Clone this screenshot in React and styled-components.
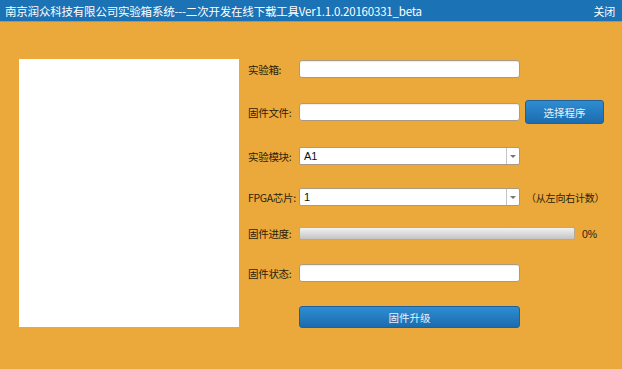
import React from "react";
import styled, { createGlobalStyle } from "styled-components";

const Global = createGlobalStyle`
  html, body { margin: 0; padding: 0; }
  body {
    width: 622px; height: 369px; overflow: hidden;
    background: #eca93b;
    font-family: "Liberation Sans", "Noto Sans CJK SC", sans-serif;
  }
`;

const Window = styled.div`
  width: 622px; height: 369px;
  background: #eca93b;
  display: flex; flex-direction: column;
`;

const TitleBar = styled.div`
  height: 21px;
  background: #1b72b5;
  border-bottom: 1px solid #6aa3c8;
  display: flex; align-items: center; justify-content: space-between;
  padding: 0 7px 0 5px;
  color: #ffffff;
  font-size: 11.5px;
  font-family: "Noto Sans CJK SC", sans-serif;
  letter-spacing: -0.2px;
`;

const Close = styled.span`
  font-size: 11px;
`;

const Body = styled.div`
  display: flex;
  padding: 37px 0 0 19px;
  gap: 9px;
`;

const Panel = styled.div`
  width: 220px; height: 268px;
  background: #ffffff;
`;

const Form = styled.div`
  display: flex; flex-direction: column;
  padding-top: 1px;
`;

const Row = styled.div`
  display: flex; align-items: center;
  height: ${p => p.$h}px;
  margin-bottom: ${p => p.$mb || 0}px;
`;

const Label = styled.div`
  width: 51px;
  font-size: 10.5px;
  color: #2b1d0a;
  font-family: "Noto Sans CJK SC", sans-serif;
  letter-spacing: -0.3px;
  white-space: nowrap;
`;

const Input = styled.div`
  width: 219px; height: 16px;
  background: #ffffff;
  border: 1px solid #a99a80;
  border-radius: 3px;
  box-shadow: inset 0 1px 1px rgba(0,0,0,0.08);
`;

const Select = styled.div`
  width: 219px; height: 16px;
  background: #ffffff;
  border: 1px solid #a99a80;
  border-radius: 2px;
  display: flex; align-items: center;
  font-size: 11px; color: #111;
`;

const SelectText = styled.div`
  flex: 1;
  padding-left: 4px;
`;

const Arrow = styled.div`
  width: 12px; height: 100%;
  border-left: 1px solid #c4c4c4;
  display: flex; align-items: center; justify-content: center;
  &::after {
    content: "";
    border-left: 3px solid transparent;
    border-right: 3px solid transparent;
    border-top: 3px solid #777;
  }
`;

const Button = styled.div`
  width: ${p => p.$w}px; height: ${p => p.$h}px;
  box-sizing: border-box;
  background: linear-gradient(#2f8dd2, #1b6cae);
  border: 1px solid #22609a;
  border-radius: 3px;
  color: #e8f2fb;
  font-size: 10.5px;
  font-family: "Noto Sans CJK SC", sans-serif;
  display: flex; align-items: center; justify-content: center;
  margin-left: ${p => p.$ml || 0}px;
`;

const Hint = styled.div`
  margin-left: 6px;
  font-size: 10px;
  color: #2b1d0a;
  font-family: "Noto Sans CJK SC", sans-serif;
  letter-spacing: -0.2px;
`;

const Progress = styled.div`
  width: 274px; height: 11px;
  border: 1px solid #b7aa95;
  border-radius: 2px;
  background: linear-gradient(#f2f2f2, #d6d6d6 60%, #c4c4c4);
`;

const Percent = styled.div`
  margin-left: 7px;
  font-size: 10.5px;
  color: #2b1d0a;
`;

export default function App() {
  return (
    <Window>
      <Global />
      <TitleBar>
        <span>南京润众科技有限公司实验箱系统---二次开发在线下载工具Ver1.1.0.20160331_beta</span>
        <Close>关闭</Close>
      </TitleBar>
      <Body>
        <Panel />
        <Form>
          <Row $h={18} $mb={22}>
            <Label>实验箱:</Label>
            <Input />
          </Row>
          <Row $h={24} $mb={23}>
            <Label>固件文件:</Label>
            <Input />
            <Button $w={79} $h={24} $ml={5}>选择程序</Button>
          </Row>
          <Row $h={18} $mb={23}>
            <Label>实验模块:</Label>
            <Select><SelectText>A1</SelectText><Arrow /></Select>
          </Row>
          <Row $h={18} $mb={21}>
            <Label>FPGA芯片:</Label>
            <Select><SelectText>1</SelectText><Arrow /></Select>
            <Hint>（从左向右计数）</Hint>
          </Row>
          <Row $h={13} $mb={24}>
            <Label>固件进度:</Label>
            <Progress />
            <Percent>0%</Percent>
          </Row>
          <Row $h={18} $mb={24}>
            <Label>固件状态:</Label>
            <Input />
          </Row>
          <Row $h={22}>
            <Label />
            <Button $w={221} $h={22}>固件升级</Button>
          </Row>
        </Form>
      </Body>
    </Window>
  );
}
